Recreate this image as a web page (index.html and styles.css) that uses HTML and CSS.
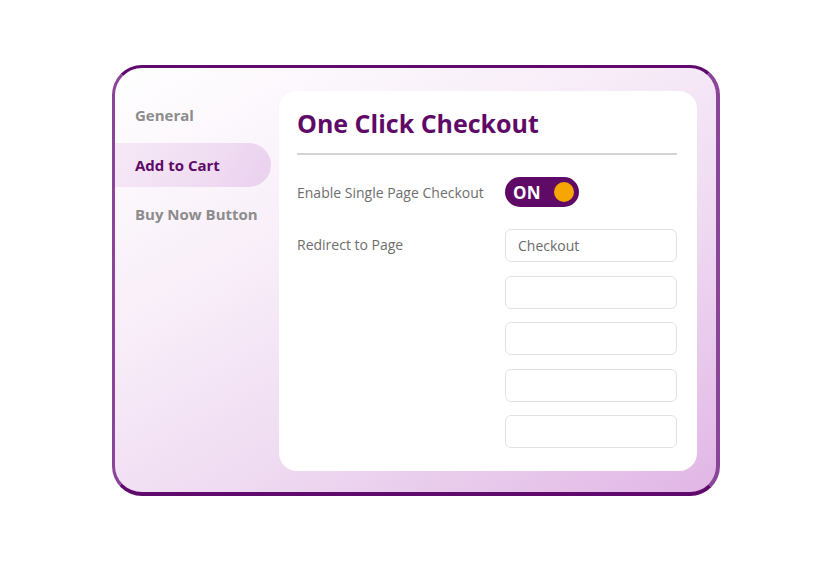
FILE: index.html
```html
<!DOCTYPE html>
<html>
<head>
<meta charset="utf-8">
<link rel="stylesheet" href="styles.css">
</head>
<body>
<div class="frame">
  <nav class="sidebar">
    <div class="nav-item">General</div>
    <div class="nav-item active">Add to Cart</div>
    <div class="nav-item">Buy Now Button</div>
  </nav>
  <main class="panel">
    <h1 class="title">One Click Checkout</h1>
    <div class="divider"></div>
    <div class="row toggle-row">
      <div class="label">Enable Single Page Checkout</div>
      <div class="toggle"><span class="toggle-text">ON</span><span class="knob"></span></div>
    </div>
    <div class="row">
      <div class="label">Redirect to Page</div>
      <div class="inputs">
        <div class="input">Checkout</div>
        <div class="input"></div>
        <div class="input"></div>
        <div class="input"></div>
        <div class="input"></div>
      </div>
    </div>
  </main>
</div>
</body>
</html>
```
FILE: styles.css
```css
* { box-sizing: border-box; }
html, body { margin: 0; padding: 0; background: #ffffff; }
body { font-family: "Open Sans", "Noto Sans", sans-serif; width: 834px; height: 563px; overflow: hidden; }

.frame {
  margin: 65px 0 0 112px;
  width: 608px;
  height: 431px;
  border: 3px solid #8a4598;
  border-top-color: #5f0a6c;
  border-bottom: 4px solid #5f0a6c;
  border-right-width: 4px;
  border-radius: 30px;
  background: linear-gradient(150deg, #ffffff 0%, #f8eef9 35%, #eed9f1 65%, #e1b6e5 100%);
  display: flex;
  padding: 23px 20px 21px 0;
}

.sidebar {
  width: 164px;
  flex: none;
  padding-top: 2px;
  display: flex;
  flex-direction: column;
  gap: 5px;
}
.nav-item {
  height: 44px;
  width: 156px;
  display: flex;
  align-items: center;
  padding-left: 20px;
  font-size: 15px;
  font-weight: 700;
  color: #8c8c8c;
  border-radius: 0 22px 22px 0;
}
.nav-item:first-child { margin-bottom: 1px; }
.nav-item.active {
  color: #5e0a66;
  background: linear-gradient(120deg, #f6e9f7 0%, #efdcf2 60%, #ead0ee 100%);
}

.panel {
  flex: 1;
  background: #ffffff;
  border-radius: 18px;
  padding: 14px 20px 0 18px;
}
.title {
  margin: 0;
  font-size: 25px;
  line-height: 36px;
  font-weight: 700;
  color: #5e0a66;
}
.divider {
  height: 2px;
  background: #d3d3d3;
  margin-top: 12px;
  width: 380px;
}
.row {
  display: flex;
}
.label {
  width: 208px;
  flex: none;
  font-size: 14px;
  color: #6e6e6e;
}
.toggle-row {
  margin-top: 22px;
  align-items: center;
}
.toggle {
  width: 74px;
  height: 30px;
  border-radius: 15px;
  background: #5e0a66;
  display: flex;
  align-items: center;
  justify-content: space-between;
  padding: 0 5px 0 8px;
}
.toggle-text {
  color: #ffffff;
  font-size: 17px;
  font-weight: 700;
  letter-spacing: 0.3px;
}
.knob {
  width: 20px;
  height: 20px;
  border-radius: 50%;
  background: #f7a500;
}
.row:not(.toggle-row) {
  margin-top: 22px;
}
.row:not(.toggle-row) .label {
  padding-top: 6px;
}
.inputs {
  display: flex;
  flex-direction: column;
  gap: 13.5px;
}
.input {
  width: 172px;
  height: 33px;
  border: 1px solid #e2e2e2;
  border-radius: 6px;
  font-size: 14px;
  color: #6a6a6a;
  padding: 0 12px;
  line-height: 31px;
}
```
